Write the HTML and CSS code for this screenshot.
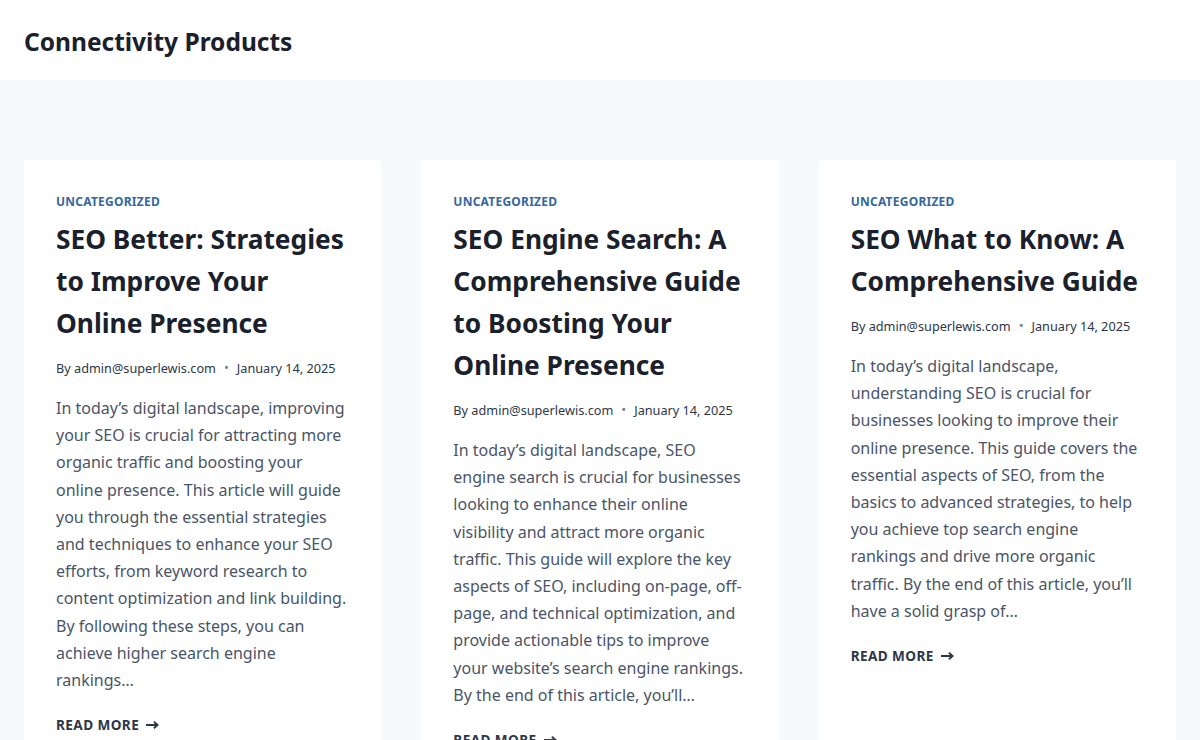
FILE: index.html
```html
<!DOCTYPE html>
<html lang="en">
<head>
<meta charset="utf-8">
<title>Connectivity Products</title>
<link rel="stylesheet" href="styles.css">
</head>
<body>
<header class="page-header">
  <h1 class="page-title">Connectivity Products</h1>
</header>
<main class="content">
  <div class="grid">
    <article class="card">
      <div class="cat">UNCATEGORIZED</div>
      <h2 class="title">SEO Better: Strategies to Improve Your Online Presence</h2>
      <div class="meta"><span>By admin@superlewis.com</span><span class="dot">•</span><span>January 14, 2025</span></div>
      <p class="excerpt">In today’s digital landscape, improving your SEO is crucial for attracting more organic traffic and boosting your online presence. This article will guide you through the essential strategies and techniques to enhance your SEO efforts, from keyword research to content optimization and link building. By following these steps, you can achieve higher search engine rankings…</p>
      <a class="more" href="#">READ MORE <svg class="arrow" viewBox="0 0 14 10" width="14" height="10"><path d="M0 5H12M8.5 1.5L12.5 5L8.5 8.5" fill="none" stroke="currentColor" stroke-width="2"/></svg></a>
    </article>
    <article class="card">
      <div class="cat">UNCATEGORIZED</div>
      <h2 class="title">SEO Engine Search: A Comprehensive Guide to Boosting Your Online Presence</h2>
      <div class="meta"><span>By admin@superlewis.com</span><span class="dot">•</span><span>January 14, 2025</span></div>
      <p class="excerpt">In today’s digital landscape, SEO engine search is crucial for businesses looking to enhance their online visibility and attract more organic traffic. This guide will explore the key aspects of SEO, including on-page, off-page, and technical optimization, and provide actionable tips to improve your website’s search engine rankings. By the end of this article, you’ll…</p>
      <a class="more" href="#">READ MORE <svg class="arrow" viewBox="0 0 14 10" width="14" height="10"><path d="M0 5H12M8.5 1.5L12.5 5L8.5 8.5" fill="none" stroke="currentColor" stroke-width="2"/></svg></a>
    </article>
    <article class="card">
      <div class="cat">UNCATEGORIZED</div>
      <h2 class="title">SEO What to Know: A Comprehensive Guide</h2>
      <div class="meta"><span>By admin@superlewis.com</span><span class="dot">•</span><span>January 14, 2025</span></div>
      <p class="excerpt">In today’s digital landscape, understanding SEO is crucial for businesses looking to improve their online presence. This guide covers the essential aspects of SEO, from the basics to advanced strategies, to help you achieve top search engine rankings and drive more organic traffic. By the end of this article, you’ll have a solid grasp of…</p>
      <a class="more" href="#">READ MORE <svg class="arrow" viewBox="0 0 14 10" width="14" height="10"><path d="M0 5H12M8.5 1.5L12.5 5L8.5 8.5" fill="none" stroke="currentColor" stroke-width="2"/></svg></a>
    </article>
  </div>
</main>
</body>
</html>
```
FILE: styles.css
```css
html, body {
  margin: 0;
  padding: 0;
}
body {
  font-family: "Noto Sans", "Open Sans", sans-serif;
  background: #f7fafc;
  color: #4a5568;
  height: 740px;
  overflow: hidden;
}
.page-header {
  background: #ffffff;
  height: 80px;
  padding: 0 24px;
  display: flex;
  align-items: center;
}
.page-title {
  margin: 0;
  font-size: 24.5px;
  font-weight: 700;
  color: #1a202c;
  line-height: 1.2;
  padding-top: 3px;
}
.content {
  padding: 80px 24px 0;
}
.grid {
  display: grid;
  grid-template-columns: repeat(3, 1fr);
  column-gap: 40px;
  align-items: stretch;
}
.card {
  background: #ffffff;
  border-radius: 4px;
  box-shadow: 0 15px 15px -10px rgba(0, 0, 0, 0.05);
  padding: 33px 32px 40px;
  display: flex;
  flex-direction: column;
  align-items: flex-start;
}
.cat {
  font-size: 12px;
  font-weight: 700;
  color: #35679f;
  letter-spacing: 0.02em;
  line-height: 18px;
}
.title {
  margin: 7px 0 0;
  font-size: 26.3px;
  line-height: 42px;
  font-weight: 700;
  color: #1a202c;
}
.meta {
  margin-top: 14px;
  font-size: 12.7px;
  line-height: 20px;
  color: #2d3748;
  display: flex;
  align-items: center;
}
.dot {
  margin: 0 8px;
  color: #718096;
  font-size: 13px;
  position: relative;
  top: -1px;
}
.excerpt {
  margin: 17px 0 0;
  font-size: 16px;
  line-height: 27.2px;
  color: #4a5568;
}
.more {
  margin-top: 20px;
  font-size: 13.6px;
  line-height: 22px;
  font-weight: 700;
  color: #2d3748;
  text-decoration: none;
  letter-spacing: 0.03em;
  display: flex;
  align-items: center;
}
.arrow {
  margin-left: 7px;
  width: 13px;
  height: 10px;
}
```
